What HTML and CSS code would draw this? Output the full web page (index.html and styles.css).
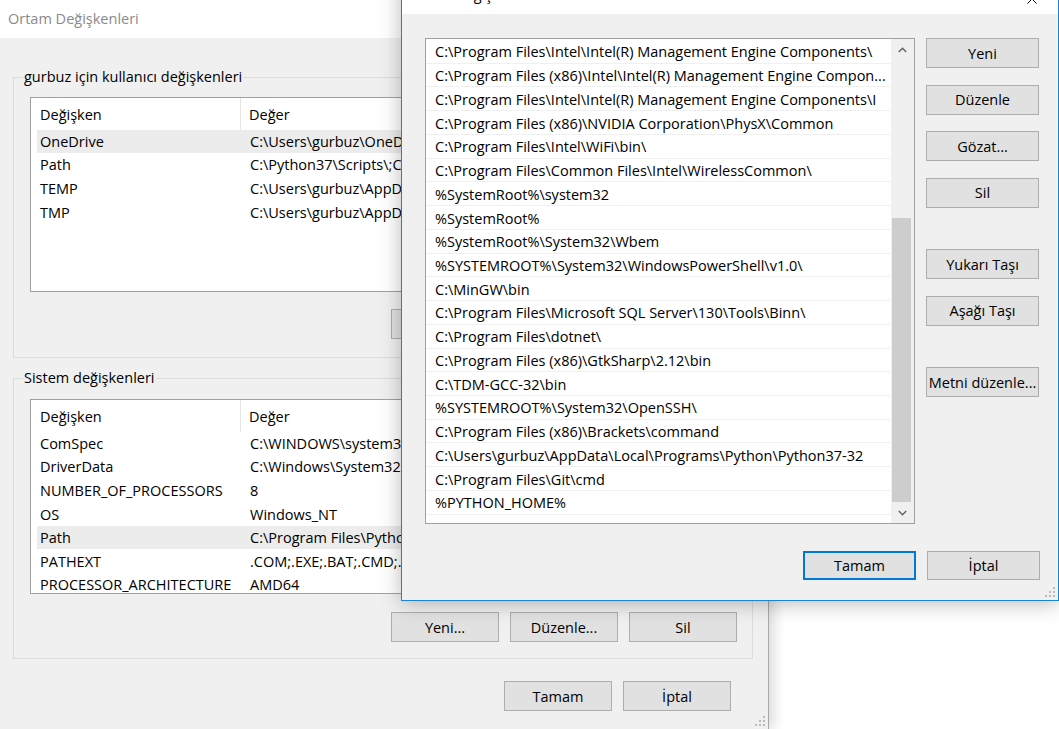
FILE: index.html
```html
<!DOCTYPE html>
<html lang="tr">
<head>
    <meta charset="UTF-8">
    <meta name="viewport" content="width=device-width, initial-scale=1.0">
    <title>Ortam Değişkenleri</title>
    <link rel="stylesheet" href="styles.css">
</head>
<body>
    <div class="window env-window">
        <div class="titlebar">Ortam Değişkenleri</div>
        <div class="window-body">
            <fieldset class="group user-group">
                <legend>gurbuz için kullanıcı değişkenleri</legend>
                <div class="listview">
                    <div class="lv-header">
                        <div class="col-name">Değişken</div>
                        <div class="col-value">Değer</div>
                    </div>
                    <div class="lv-row selected"><span class="col-name">OneDrive</span><span class="col-value">C:\Users\gurbuz\OneDrive</span></div>
                    <div class="lv-row"><span class="col-name">Path</span><span class="col-value">C:\Python37\Scripts\;C:\Python37\;C:\Users\gurbuz\AppData\Local\Microsoft\WindowsApps;</span></div>
                    <div class="lv-row"><span class="col-name">TEMP</span><span class="col-value">C:\Users\gurbuz\AppData\Local\Temp</span></div>
                    <div class="lv-row"><span class="col-name">TMP</span><span class="col-value">C:\Users\gurbuz\AppData\Local\Temp</span></div>
                </div>
                <div class="button-row">
                    <button class="btn">Yeni...</button>
                    <button class="btn">Düzenle...</button>
                    <button class="btn">Sil</button>
                </div>
            </fieldset>
            <fieldset class="group system-group">
                <legend>Sistem değişkenleri</legend>
                <div class="listview">
                    <div class="lv-header">
                        <div class="col-name">Değişken</div>
                        <div class="col-value">Değer</div>
                    </div>
                    <div class="lv-row"><span class="col-name">ComSpec</span><span class="col-value">C:\WINDOWS\system32\cmd.exe</span></div>
                    <div class="lv-row"><span class="col-name">DriverData</span><span class="col-value">C:\Windows\System32\Drivers\DriverData</span></div>
                    <div class="lv-row"><span class="col-name">NUMBER_OF_PROCESSORS</span><span class="col-value">8</span></div>
                    <div class="lv-row"><span class="col-name">OS</span><span class="col-value">Windows_NT</span></div>
                    <div class="lv-row selected"><span class="col-name">Path</span><span class="col-value">C:\Program Files\Python37\Scripts\;C:\Program Files\Python37\;</span></div>
                    <div class="lv-row"><span class="col-name">PATHEXT</span><span class="col-value">.COM;.EXE;.BAT;.CMD;.VBS;.VBE;.JS;.JSE;.WSF;.WSH;.MSC</span></div>
                    <div class="lv-row"><span class="col-name">PROCESSOR_ARCHITECTURE</span><span class="col-value">AMD64</span></div>
                    <div class="lv-row"><span class="col-name">PROCESSOR_IDENTIFIER</span><span class="col-value">Intel64 Family 6 Model 158</span></div>
                </div>
                <div class="button-row">
                    <button class="btn">Yeni...</button>
                    <button class="btn">Düzenle...</button>
                    <button class="btn">Sil</button>
                </div>
            </fieldset>
            <div class="button-row dialog-buttons">
                <button class="btn">Tamam</button>
                <button class="btn">İptal</button>
            </div>
        </div>
        <svg class="grip" width="10" height="10" viewBox="0 0 10 10">
            <rect x="8" y="0" width="2" height="2"/>
            <rect x="4" y="4" width="2" height="2"/>
            <rect x="8" y="4" width="2" height="2"/>
            <rect x="0" y="8" width="2" height="2"/>
            <rect x="4" y="8" width="2" height="2"/>
            <rect x="8" y="8" width="2" height="2"/>
        </svg>
    </div>

    <div class="window edit-window">
        <div class="titlebar">
            <span class="title">Ortam değişkenini düzenle</span>
            <span class="close">
                <svg width="10" height="10" viewBox="0 0 10 10"><path d="M0.5 0.5 L9.5 9.5 M9.5 0.5 L0.5 9.5" stroke="#000" stroke-width="1"/></svg>
            </span>
        </div>
        <div class="edit-body">
            <div class="edit-main">
                <div class="listbox">
                    <div class="items">
                        <div class="item">C:\Program Files\Intel\Intel(R) Management Engine Components\</div>
                        <div class="item">C:\Program Files (x86)\Intel\Intel(R) Management Engine Compon...</div>
                        <div class="item">C:\Program Files\Intel\Intel(R) Management Engine Components\I</div>
                        <div class="item">C:\Program Files (x86)\NVIDIA Corporation\PhysX\Common</div>
                        <div class="item">C:\Program Files\Intel\WiFi\bin\</div>
                        <div class="item">C:\Program Files\Common Files\Intel\WirelessCommon\</div>
                        <div class="item">%SystemRoot%\system32</div>
                        <div class="item">%SystemRoot%</div>
                        <div class="item">%SystemRoot%\System32\Wbem</div>
                        <div class="item">%SYSTEMROOT%\System32\WindowsPowerShell\v1.0\</div>
                        <div class="item">C:\MinGW\bin</div>
                        <div class="item">C:\Program Files\Microsoft SQL Server\130\Tools\Binn\</div>
                        <div class="item">C:\Program Files\dotnet\</div>
                        <div class="item">C:\Program Files (x86)\GtkSharp\2.12\bin</div>
                        <div class="item">C:\TDM-GCC-32\bin</div>
                        <div class="item">%SYSTEMROOT%\System32\OpenSSH\</div>
                        <div class="item">C:\Program Files (x86)\Brackets\command</div>
                        <div class="item">C:\Users\gurbuz\AppData\Local\Programs\Python\Python37-32</div>
                        <div class="item">C:\Program Files\Git\cmd</div>
                        <div class="item">%PYTHON_HOME%</div>
                    </div>
                    <div class="scrollbar">
                        <div class="arrow">
                            <svg width="9" height="6" viewBox="0 0 9 6"><path d="M0.8 5 L4.5 1.3 L8.2 5" fill="none" stroke="#606060" stroke-width="1.4"/></svg>
                        </div>
                        <div class="track">
                            <div class="thumb"></div>
                        </div>
                        <div class="arrow">
                            <svg width="9" height="6" viewBox="0 0 9 6"><path d="M0.8 1 L4.5 4.7 L8.2 1" fill="none" stroke="#606060" stroke-width="1.4"/></svg>
                        </div>
                    </div>
                </div>
                <div class="side-buttons">
                    <button class="btn wide">Yeni</button>
                    <button class="btn wide">Düzenle</button>
                    <button class="btn wide">Gözat...</button>
                    <button class="btn wide">Sil</button>
                    <button class="btn wide spaced">Yukarı Taşı</button>
                    <button class="btn wide">Aşağı Taşı</button>
                    <button class="btn wide spaced">Metni düzenle...</button>
                </div>
            </div>
            <div class="edit-footer">
                <button class="btn wide default">Tamam</button>
                <button class="btn wide">İptal</button>
            </div>
        </div>
        <svg class="grip" width="10" height="10" viewBox="0 0 10 10">
            <rect x="8" y="0" width="2" height="2"/>
            <rect x="4" y="4" width="2" height="2"/>
            <rect x="8" y="4" width="2" height="2"/>
            <rect x="0" y="8" width="2" height="2"/>
            <rect x="4" y="8" width="2" height="2"/>
            <rect x="8" y="8" width="2" height="2"/>
        </svg>
    </div>
</body>
</html>
```

FILE: styles.css
```css
body {
    margin: 0;
    width: 1059px;
    height: 729px;
    overflow: hidden;
    position: relative;
    background: #fff;
    font-family: "Open Sans", "Noto Sans", sans-serif;
    font-size: 14.5px;
    color: #000;
}
.window {
    position: absolute;
    box-sizing: border-box;
    background: #f0f0f0;
    display: flex;
    flex-direction: column;
}
.titlebar {
    background: #fff;
    display: flex;
    align-items: center;
    white-space: nowrap;
    flex-shrink: 0;
}
.btn {
    width: 108px;
    height: 30px;
    padding: 0;
    margin: 0;
    background: #e1e1e1;
    border: 1px solid #adadad;
    font-family: inherit;
    font-size: 14.5px;
    color: #000;
    box-sizing: border-box;
}
.btn.wide {
    width: 113px;
}
.btn.default {
    border: 2px solid #0078d7;
}
.grip {
    position: absolute;
    right: 3px;
    bottom: 3px;
    fill: #bcbcbc;
}

/* back dialog */
.env-window {
    left: -1px;
    top: -1px;
    width: 770px;
    height: 731px;
    border: 1px solid #a8a8a8;
    box-shadow: 3px 0 14px rgba(0, 0, 0, 0.18);
}
.env-window .titlebar {
    height: 38px;
    padding-left: 8px;
    padding-bottom: 1px;
    box-sizing: border-box;
    color: #8a8a8a;
}
.window-body {
    padding: 0 15px 0 13px;
}
.group {
    margin: 29px 0 0 0;
    border: 1px solid #dcdcdc;
    padding: 10px 15px 18px 16px;
    min-width: 0;
}
.group legend {
    margin-left: -7px;
    padding: 0 1px;
    line-height: 20px;
}
.system-group {
    margin-top: 10px;
    padding-top: 11px;
    padding-bottom: 16px;
}
.listview {
    height: 195px;
    box-sizing: border-box;
    border: 1px solid #a0a0a0;
    background: #fff;
    overflow: hidden;
}
.lv-header {
    display: flex;
    height: 31.5px;
    align-items: stretch;
}
.lv-header .col-name {
    width: 210px;
    padding: 1px 0 0 9px;
    box-sizing: border-box;
    border-right: 1px solid #e5e5e5;
    display: flex;
    align-items: center;
}
.lv-header .col-value {
    padding: 1px 0 0 8px;
    display: flex;
    align-items: center;
}
.lv-row {
    display: flex;
    align-items: center;
    height: 23.6px;
    margin-left: 6px;
    white-space: nowrap;
}
.lv-row.selected {
    background: #ececec;
}
.lv-row .col-name {
    width: 204px;
    padding-left: 3px;
    box-sizing: border-box;
    flex-shrink: 0;
}
.lv-row .col-value {
    padding-left: 9px;
}
.button-row {
    display: flex;
    justify-content: flex-end;
    gap: 11px;
    margin-top: 17px;
}
.system-group .button-row {
    margin-top: 18px;
}
.dialog-buttons {
    margin-top: 22px;
    padding-right: 22px;
}

/* edit dialog */
.edit-window {
    left: 401px;
    top: -24px;
    width: 658px;
    height: 625px;
    border: 1px solid #1883d7;
    box-shadow: 0 2px 20px rgba(0, 0, 0, 0.28);
}
.edit-window .titlebar {
    height: 37px;
    padding-left: 7px;
}
.edit-window .title {
    flex: 1;
    position: relative;
    top: -1px;
}
.close {
    width: 50px;
    height: 37px;
    box-sizing: border-box;
    padding-top: 7px;
    margin-right: 1px;
    display: flex;
    align-items: center;
    justify-content: center;
}
.edit-body {
    padding: 24px 18px 0 23px;
}
.edit-main {
    display: flex;
    gap: 11px;
    align-items: flex-start;
}
.listbox {
    width: 490px;
    height: 486px;
    box-sizing: border-box;
    border: 1px solid #a0a0a0;
    background: #fff;
    display: flex;
    overflow: hidden;
}
.items {
    flex: 1;
    padding-top: 1px;
    overflow: hidden;
}
.item {
    height: 23.74px;
    box-sizing: border-box;
    border-bottom: 1px solid #f0f0f0;
    padding: 1px 0 0 9px;
    display: flex;
    align-items: center;
    white-space: nowrap;
    overflow: hidden;
}
.scrollbar {
    width: 23px;
    display: flex;
    flex-direction: column;
    background: #f0f0f0;
}
.arrow {
    height: 21px;
    display: flex;
    align-items: center;
    justify-content: center;
    flex-shrink: 0;
}
.track {
    flex: 1;
    display: flex;
    flex-direction: column;
}
.thumb {
    margin: auto 3px 0 1px;
    height: 284px;
    background: #cdcdcd;
}
.side-buttons {
    display: flex;
    flex-direction: column;
    gap: 16.5px;
}
.side-buttons .spaced {
    margin-top: 25px;
}
.edit-footer {
    display: flex;
    justify-content: flex-end;
    gap: 11px;
    margin-top: 27px;
}
.edit-footer .btn {
    height: 29px;
}
```
